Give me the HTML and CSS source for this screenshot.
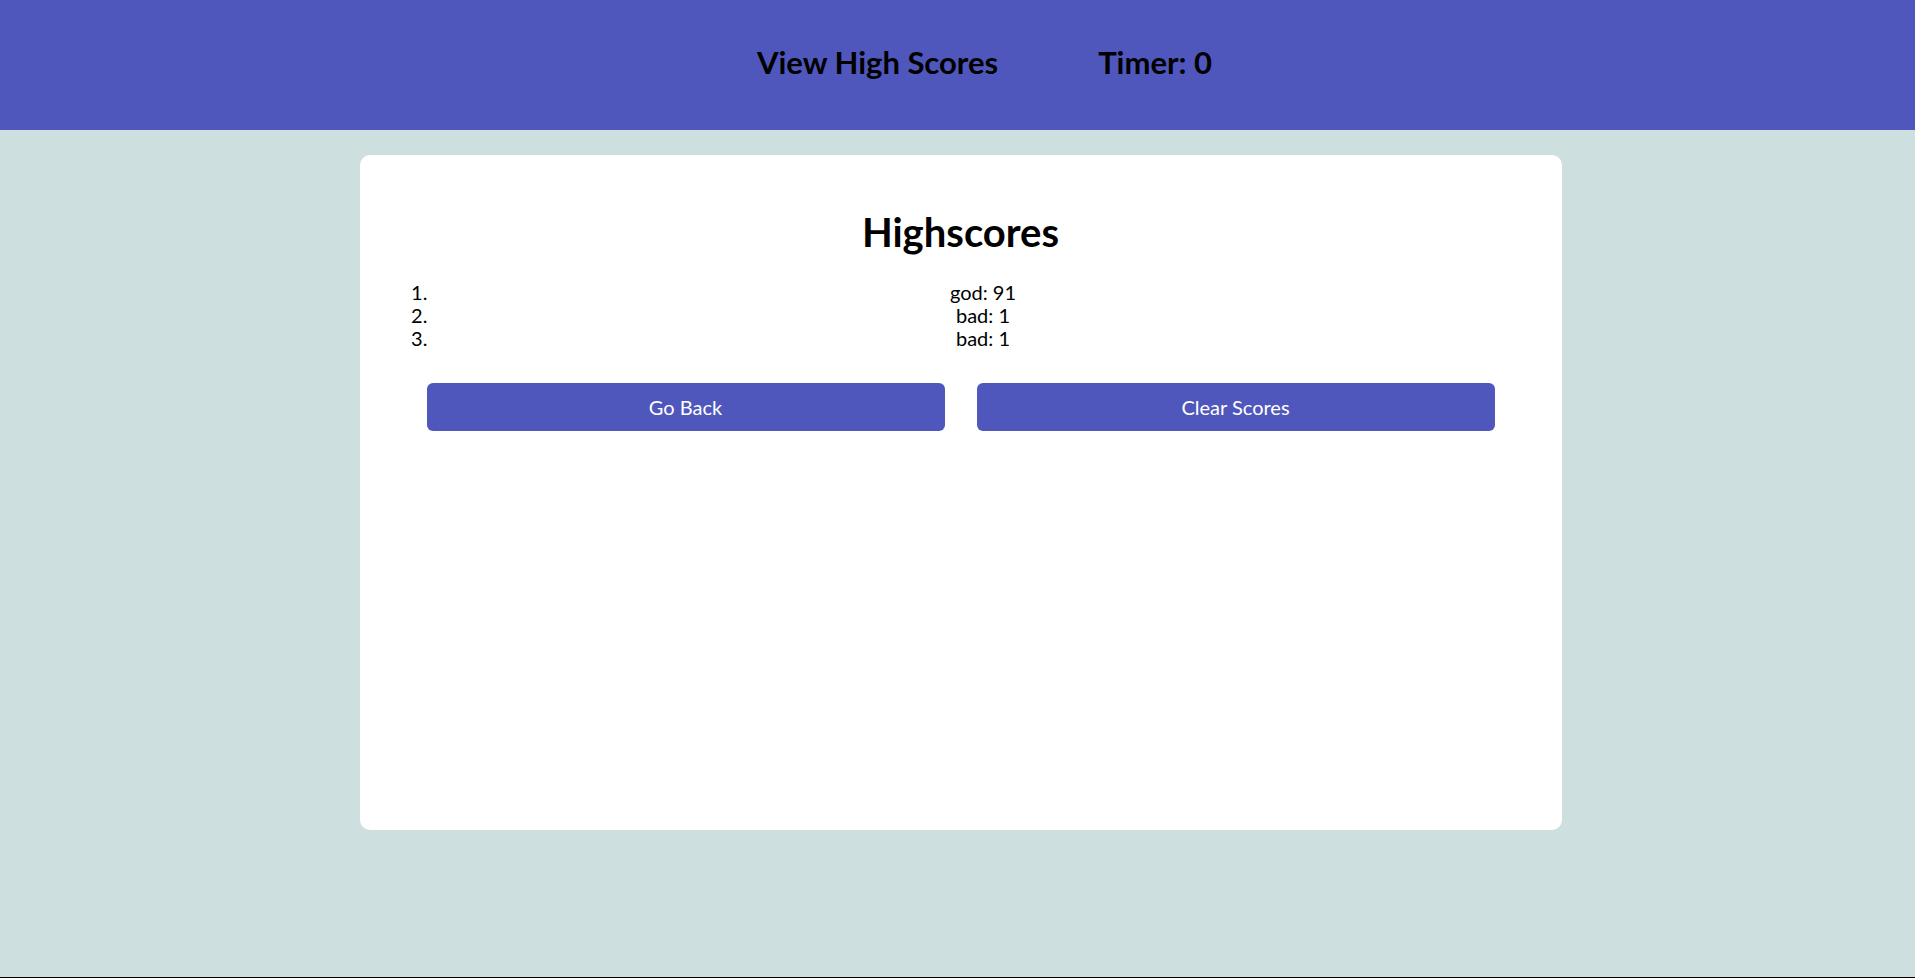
FILE: index.html
```html
<!DOCTYPE html>
<html lang="en">
<head>
<meta charset="utf-8">
<title>Highscores</title>
<link rel="stylesheet" href="styles.css">
</head>
<body>
<header class="topbar">
  <a class="topbar-link" href="#">View High Scores</a>
  <span class="topbar-timer">Timer: 0</span>
</header>
<main class="card">
  <h1 class="card-title">Highscores</h1>
  <ol class="score-list">
    <li>god: 91</li>
    <li>bad: 1</li>
    <li>bad: 1</li>
  </ol>
  <div class="actions">
    <button class="btn" type="button">Go Back</button>
    <button class="btn" type="button">Clear Scores</button>
  </div>
</main>
</body>
</html>
```

FILE: styles.css
```css
* { box-sizing: border-box; }
html, body { margin: 0; padding: 0; }
body {
  min-height: 100vh;
  background: #cddfdf;
  font-family: "Trebuchet MS", Lato, "Noto Sans", sans-serif;
  color: #000;
  border-bottom: 1px solid #000;
}
.topbar {
  height: 130px;
  background: #4f57bd;
  display: flex;
  justify-content: center;
  align-items: center;
  gap: 100px;
  padding: 0 0 6px 54px;
  font-size: 31px;
  font-weight: 700;
}
.topbar-link { color: #000; text-decoration: none; }
.card {
  width: 1202px;
  height: 675px;
  margin: 25px 0 0 calc(50% - 598px);
  background: #fff;
  border-radius: 10px;
  padding: 28px;
}
.card-title {
  margin: 25px 0 25px;
  text-align: center;
  font-size: 40px;
  font-weight: 700;
}
.score-list {
  margin: 0 0 0 5px;
  padding-left: 40px;
  font-size: 20px;
  line-height: 23px;
}
.score-list li { text-align: center; }
.actions {
  display: flex;
  gap: 32px;
  padding: 0 39px;
  margin-top: 33px;
}
.btn {
  flex: 1;
  height: 48px;
  border: none;
  border-radius: 6px;
  background: #4f57bd;
  color: #fff;
  font-family: inherit;
  font-size: 20px;
  cursor: pointer;
}
```
